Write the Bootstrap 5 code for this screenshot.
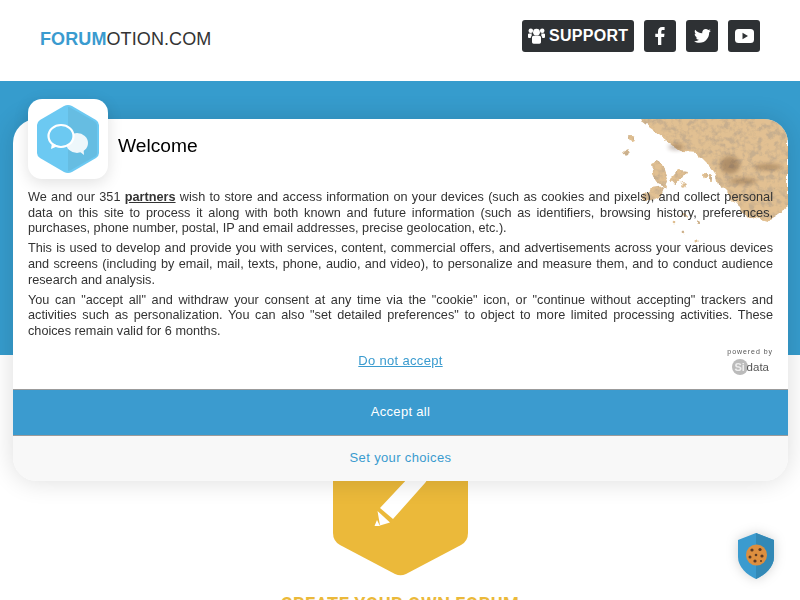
<!DOCTYPE html>
<html lang="en">
<head>
<meta charset="utf-8">
<title>Forumotion</title>
<link href="https://cdn.jsdelivr.net/npm/bootstrap@5.3.0/dist/css/bootstrap.min.css" rel="stylesheet">
<style>
html,body{height:600px;overflow:hidden;background:#fff;font-family:"Liberation Sans",Arial,sans-serif}
.top-head{height:81px;padding:20px 40px 0 40px}
.fm-logo{font-size:18px;line-height:38px;color:#333;letter-spacing:.1px}
.fm-logo b{color:#3a9bcf}
.soc-btn{height:32px;width:32px;background:#2e3134;color:#fff;border-radius:3px;font-weight:700;font-size:16px}
.soc-wide{width:112px;gap:4px;padding-left:6px;letter-spacing:.3px}
.soc-row{gap:10px}
.hero-band{height:274px;background:#369ccd}
.hex-wrap{width:135px;height:221px}
.create-title{color:#ebb93a;font-family:Roboto,sans-serif;font-weight:700;font-size:18px;margin-top:17px;letter-spacing:.5px;line-height:22px}
.consent{position:fixed;left:13px;top:119px;width:775px;height:362px;background:#fff;border-radius:24px;box-shadow:0 0 26px rgba(0,0,0,.14);z-index:10}
.consent-inner{border-radius:24px;overflow:hidden;height:362px;position:relative}
.cookie-art{position:absolute;right:0;top:0}
.app-tile{position:fixed;left:28px;top:99px;width:80px;height:80px;background:#fff;border-radius:14px;box-shadow:0 4px 16px rgba(0,0,0,.12);z-index:11}
.consent-title{height:71px;padding-left:105px;padding-top:13px;font-size:19.2px;line-height:28px;color:#000;position:relative}
.consent-copy{position:relative;padding:0 15px;font-size:12.7px;line-height:15.6px;color:#333;text-align:justify}
.consent-copy p{margin:0 0 4.600px}
.consent-copy b{text-decoration:underline;color:#333}
.deny-row{position:relative;height:45px}
.deny-link{color:#3a9bcf;font-size:13px;text-decoration:underline;letter-spacing:.32px;margin-top:7px}
.sirdata{position:absolute;right:15px;top:3px;text-align:center;font-size:7px;color:#555;letter-spacing:.95px;line-height:10px}
.sirdata-mark{display:flex;justify-content:flex-end;align-items:center;font-size:11.500px;letter-spacing:0;height:18px;margin-top:1px;color:#555;padding-right:4px}
.sir-dot{width:16px;height:16px;border-radius:50%;background:#bbb;color:#eee;font-size:11px;line-height:16px;margin-right:-1px;font-weight:700}
.accept-btn{height:47px;background:#3b9bcf;color:#fff;font-size:13px;letter-spacing:.32px;border-top:1px solid #9b9b9b;border-bottom:1px solid #9b9b9b;padding-bottom:2px}
.choice-btn{height:45px;background:#f8f8f8;color:#3a9bcf;font-size:13px;letter-spacing:.36px;padding-bottom:2px}
.shield-btn{position:fixed;left:735px;top:531px;width:42px;height:50px;z-index:9;filter:drop-shadow(0 0 6px rgba(0,0,0,.18))}
</style>
</head>
<body>
<header class="top-head d-flex justify-content-between align-items-start">
  <div class="fm-logo"><b>FORUM</b>OTION.COM</div>
  <div class="d-flex soc-row">
    <a class="soc-btn soc-wide d-flex align-items-center text-decoration-none">
      <svg width="17" height="16" viewBox="0 0 17 16" fill="#fff"><circle cx="8.500" cy="4.200" r="3.400"/><circle cx="2.800" cy="2.800" r="2.300"/><circle cx="14.200" cy="2.800" r="2.300"/><path d="M4 9.300q0-1.600 1.700-1.600h5.600q1.700 0 1.700 1.600v5q0 1.400-1.600 1.400H5.600Q4 15.700 4 14.300zM0 6.300q0-.9 1.200-.9h2.700q-.5 1-.2 2.300-1 .7-1 2.300H1q-1 0-1-1zM17 6.300q0-.9-1.200-.9h-2.700q.5 1 .2 2.300 1 .7 1 2.300H16q1 0 1-1z"/></svg>
      <span>SUPPORT</span>
    </a>
    <a class="soc-btn d-flex align-items-center justify-content-center">
      <svg width="10" height="18" viewBox="0 0 10 18" fill="#fff"><path d="M3 18V10H.3V6.800H3V4.400C3 1.600 4.600 0 7.100 0c1.200 0 2.200.1 2.500.1v2.900H7.900c-1.300 0-1.600.7-1.600 1.600v2.200h3.200L9.100 10H6.300v8z"/></svg>
    </a>
    <a class="soc-btn d-flex align-items-center justify-content-center">
      <svg width="17" height="14" viewBox="0 0 24 20" fill="#fff"><path d="M21.500 5c0 .2 0 .4 0 .6C21.500 12.100 16.600 19.600 7.600 19.600 4.800 19.600 2.200 18.800 0 17.400c.4 0 .8.100 1.200.1 2.300 0 4.400-.8 6.100-2.100-2.200 0-4-1.500-4.600-3.400.3 0 .6.100.9.100.4 0 .9-.1 1.300-.2C2.600 11.400.9 9.400.9 7v-.1c.7.400 1.400.6 2.200.6C1.800 6.700.9 5.200.9 3.500c0-.9.200-1.700.7-2.500C4 4 7.600 6 11.700 6.200c-.1-.4-.1-.7-.1-1.100C11.600 2.300 13.800 0 16.600 0c1.400 0 2.700.6 3.600 1.600 1.100-.2 2.200-.6 3.100-1.200-.4 1.200-1.100 2.200-2.200 2.800 1-.1 2-.4 2.900-.8-.7 1-1.500 1.900-2.500 2.600z"/></svg>
    </a>
    <a class="soc-btn d-flex align-items-center justify-content-center">
      <svg width="19" height="14" viewBox="0 0 19 14"><rect width="19" height="14" rx="3.500" fill="#fff"/><path d="M7.500 3.800v6.400l5.500-3.200z" fill="#2e3134"/></svg>
    </a>
  </div>
</header>
<section class="hero-band"></section>
<section class="d-flex flex-column align-items-center">
  <svg class="hex-wrap" viewBox="0 0 135 221">
    <path d="M0 0H135V178q0 8-7 12L73 219q-5.500 2.500-11 0L7 190Q0 186 0 178z" fill="#ebb93a"/>
    <path d="M47 153L76 122 92 122q3 3 0 6L60 164zM44.500 156L57 167.500 47 170.500zM41.500 171L44 165 47 171z" fill="#fff"/>
  </svg>
  <div class="create-title">CREATE YOUR OWN FORUM</div>
</section>

<svg class="shield-btn" viewBox="0 0 42 50">
  <path d="M21 2L39 9V26C39 36 30 44 21 48 12 44 3 36 3 26V9z" fill="#3b9bcf"/>
  <path d="M21 2L39 9V26C39 36 30 44 21 48z" fill="#3389b6"/>
  <circle cx="21.500" cy="24" r="10.500" fill="#dd8f3f"/>
  <g fill="#5b3a24"><circle cx="17" cy="19" r="1.600"/><circle cx="25" cy="18.500" r="1.600"/><circle cx="21" cy="24" r="1.300"/><circle cx="15" cy="26" r="1.500"/><circle cx="27" cy="25" r="1.600"/><circle cx="20" cy="30" r="1.600"/><circle cx="26" cy="30" r="1"/></g>
</svg>

<div class="consent">
  <div class="consent-inner d-flex flex-column">
    <svg class="cookie-art" width="170" height="220" viewBox="0 0 170 220">
      <defs>
        <filter id="crumb" x="-10%" y="-10%" width="120%" height="120%">
          <feTurbulence type="fractalNoise" baseFrequency=".09" numOctaves="2" seed="7" result="w"/>
          <feDisplacementMap in="SourceGraphic" in2="w" scale="9" xChannelSelector="R" yChannelSelector="G" result="edge"/>
          <feTurbulence type="fractalNoise" baseFrequency=".16" numOctaves="4" seed="11"/>
          <feColorMatrix values="0 0 0 0 .42  0 0 0 0 .25  0 0 0 0 .1  2.400 2.400 0 0 -2.150"/>
          <feComposite in2="edge" operator="in" result="n"/>
          <feMerge><feMergeNode in="edge"/><feMergeNode in="n"/></feMerge>
        </filter>
        <filter id="soft"><feGaussianBlur stdDeviation="2"/></filter>
      </defs>
      <g opacity=".68" filter="url(#crumb)" fill="#d4a35e">
        <path d="M22 -6L24 3 49 21 65 33 79 34 89 44 99 58 102 68 115 81 132 98 149 103 170 88V-6z"/>
        <path d="M33 45l7-3 6 8 4 10-3 8-7-3-6-11zM52 60l8-8 8 1-3 8-7 6zM24 78l10-8 12-2-2 8-10 5-7 2z"/>
        <circle cx="14" cy="20" r="3"/><circle cx="9" cy="34" r="2.500"/><circle cx="66" cy="66" r="1.800"/>
        <circle cx="87" cy="56" r="3"/><circle cx="92" cy="60" r="2"/><circle cx="68" cy="96" r="2"/><circle cx="80" cy="105" r="2"/>
        <circle cx="56" cy="104" r="1.300"/><circle cx="64" cy="113" r="1.300"/><circle cx="78" cy="122" r="1.500"/>
      </g>
      <g opacity=".32" fill="#4a2c16" filter="url(#soft)"><ellipse cx="112" cy="46" rx="10" ry="9"/><ellipse cx="58" cy="28" rx="8" ry="3"/><ellipse cx="150" cy="48" rx="14" ry="3"/><ellipse cx="125" cy="62" rx="14" ry="3"/></g>
    </svg>
    <div class="consent-title">Welcome</div>
    <div class="consent-copy">
      <p>We and our 351 <b>partners</b> wish to store and access information on your devices (such as cookies and pixels), and collect personal data on this site to process it along with both known and future information (such as identifiers, browsing history, preferences, purchases, phone number, postal, IP and email addresses, precise geolocation, etc.).</p>
      <p>This is used to develop and provide you with services, content, commercial offers, and advertisements across your various devices and screens (including by email, mail, texts, phone, audio, and video), to personalize and measure them, and to conduct audience research and analysis.</p>
      <p>You can "accept all" and withdraw your consent at any time via the "cookie" icon, or "continue without accepting" trackers and activities such as personalization. You can also "set detailed preferences" to object to more limited processing activities. These choices remain valid for 6 months.</p>
    </div>
    <div class="deny-row d-flex justify-content-center align-items-start">
      <a class="deny-link" href="#">Do not accept</a>
      <div class="sirdata">powered by
        <div class="sirdata-mark"><span class="sir-dot">Si</span><span>data</span></div>
      </div>
    </div>
    <div class="accept-btn d-flex align-items-center justify-content-center">Accept all</div>
    <div class="choice-btn d-flex align-items-center justify-content-center">Set your choices</div>
  </div>
</div>

<div class="app-tile d-flex align-items-center justify-content-center">
  <svg width="64" height="70" viewBox="0 0 64 70">
    <path d="M32 1q2 0 4 1l24 14q3 2 3 5v28q0 3-3 5L36 68q-4 2-8 0L4 54q-3-2-3-5V21q0-3 3-5L28 2q2-1 4-1z" fill="#6cc9f2"/>
    <path d="M32 3q2 0 3 1l23 13q3 2 3 4v28q0 3-3 4L35 66q-1 1-3 1z" fill="#66bde2"/>
    <ellipse cx="41" cy="39" rx="11" ry="10" fill="#eef7fb"/>
    <path d="M43 47l5 4-.5-6z" fill="#eef7fb"/>
    <ellipse cx="25" cy="32" rx="12.500" ry="11" fill="#6cc9f2" stroke="#fff" stroke-width="2.200"/>
    <path d="M16 39l-1 6 7-3z" fill="#fff"/>
  </svg>
</div>
<script src="https://cdn.jsdelivr.net/npm/bootstrap@5.3.0/dist/js/bootstrap.bundle.min.js"></script>
</body>
</html>
